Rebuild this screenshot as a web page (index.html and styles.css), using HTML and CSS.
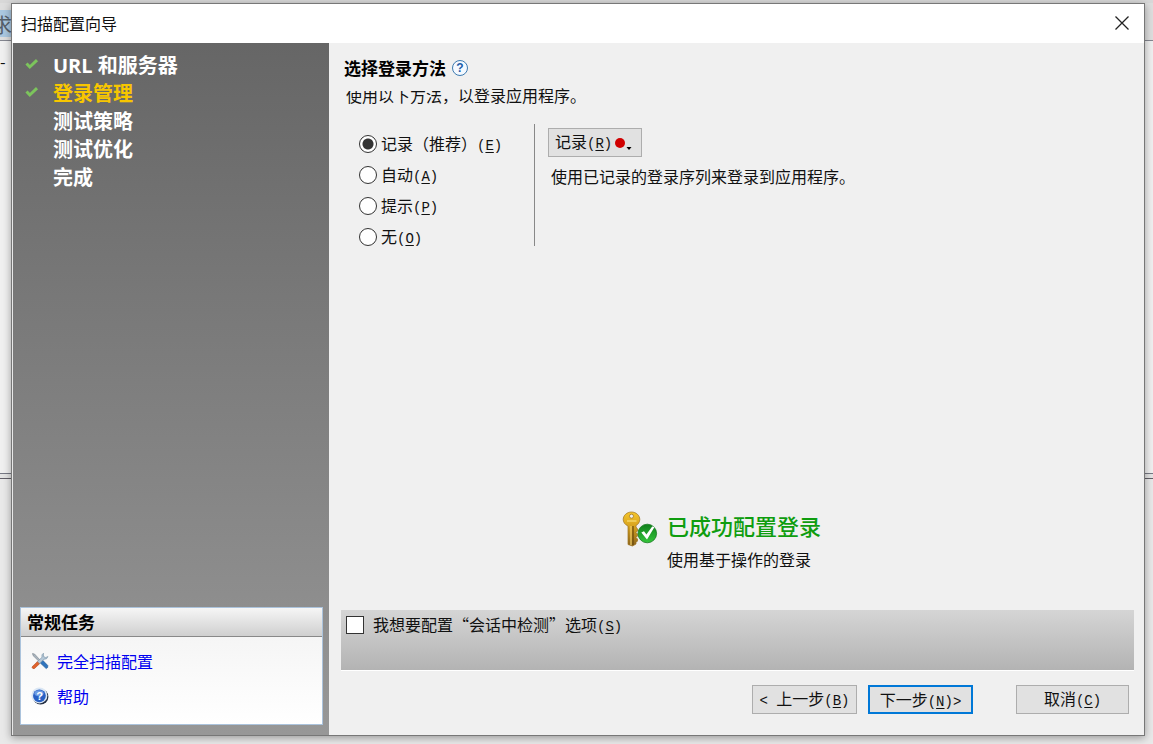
FILE: index.html
```html
<!DOCTYPE html>
<html lang="zh-CN">
<head>
	<meta charset="utf-8">
	<title>扫描配置向导</title>
	<link rel="stylesheet" href="styles.css">
</head>
<body>
	<div class="backdrop">
		<div class="backdrop-toolbar"><span>求</span></div>
		<div class="backdrop-pane">-</div>
		<div class="backdrop-splitter"></div>
		<div class="backdrop-pane lower"></div>
	</div>
	<div class="dialog">
		<header class="titlebar">
			<h1>扫描配置向导</h1>
			<button class="close" type="button" aria-label="关闭">
				<svg width="14" height="14" viewBox="0 0 14 14"><path d="M0.5 0.5L13.5 13.5M13.5 0.5L0.5 13.5" stroke="#222" stroke-width="1.3" fill="none"/></svg>
			</button>
		</header>
		<div class="body">
			<aside class="sidebar">
				<ol class="steps">
					<li><svg class="check" viewBox="0 0 14 12"><path d="M1.5 5.5L4.8 9L12 2.2" stroke="#7cc45c" stroke-width="3" fill="none"/></svg>URL 和服务器</li>
					<li class="current"><svg class="check" viewBox="0 0 14 12"><path d="M1.5 5.5L4.8 9L12 2.2" stroke="#7cc45c" stroke-width="3" fill="none"/></svg>登录管理</li>
					<li>测试策略</li>
					<li>测试优化</li>
					<li>完成</li>
				</ol>
				<section class="tasks">
					<h2>常规任务</h2>
					<ul>
						<li>
							<svg width="18" height="18" viewBox="0 0 18 18">
								<path d="M1.5 1.5L3.5 2L9.5 8.5L8.3 9.7L2 3.5Z" fill="#a9b4bd" stroke="#77828c" stroke-width="0.6"/>
								<path d="M9 9L11 7.6L16.8 13.5Q17.4 15.8 15.2 16.6L8.8 10.5Z" fill="#2f74bd" stroke="#1d5590" stroke-width="0.6"/>
								<path d="M12.5 1.2Q10.2 2.4 11 5.3L6.2 9.8L8.4 11.9L12.9 7.2Q16.2 7.6 17 4.5L14.7 5.5L12.6 4.6L12.4 3Z" fill="#b5c8d8" stroke="#7590a5" stroke-width="0.6"/>
								<path d="M6.3 9.7L8.4 11.9L3.5 16.5Q1.6 17.4 0.9 15Z" fill="#e0622c" stroke="#b34a1e" stroke-width="0.6"/>
							</svg>
							<a href="#">完全扫描配置</a>
						</li>
						<li>
							<svg width="18" height="18" viewBox="0 0 18 18">
								<circle cx="9.6" cy="9.8" r="7.8" fill="#222d42"/>
								<circle cx="8.4" cy="8.4" r="8" fill="#dbe7f4"/>
								<circle cx="8.4" cy="8.8" r="6.4" fill="#2860c4"/>
								<ellipse cx="8" cy="6.3" rx="4.6" ry="3" fill="#6b9ae4"/>
								<text class="help-mark" x="8.5" y="13" text-anchor="middle" fill="#fff">?</text>
							</svg>
							<a href="#">帮助</a>
						</li>
					</ul>
				</section>
			</aside>
			<main class="content">
				<div class="heading">
					<h2>选择登录方法</h2>
					<button class="help" type="button" aria-label="帮助">?</button>
				</div>
				<p class="intro"><span class="cut">使用以下方法</span>，以登录应用程序。</p>
				<div class="method">
					<div class="options">
						<label><input type="radio" name="method" checked><span>记录（推荐）<kbd>(<u>E</u>)</kbd></span></label>
						<label><input type="radio" name="method"><span>自动<kbd>(<u>A</u>)</kbd></span></label>
						<label><input type="radio" name="method"><span>提示<kbd>(<u>P</u>)</kbd></span></label>
						<label><input type="radio" name="method"><span>无<kbd>(<u>O</u>)</kbd></span></label>
					</div>
					<div class="detail">
						<button class="btn record" type="button">记录<kbd>(<u>R</u>)</kbd><svg width="20" height="16" viewBox="0 0 20 16"><circle cx="8" cy="8" r="5" fill="#d00000"/><path d="M14.5 12H19.5L17 15Z" fill="#000"/></svg></button>
						<p>使用已记录的登录序列来登录到应用程序。</p>
					</div>
				</div>
				<div class="success">
					<svg width="36" height="36" viewBox="0 0 36 36">
						<defs>
							<linearGradient id="gold" x1="0" y1="0" x2="0" y2="1">
								<stop offset="0" stop-color="#f5c62c"/>
								<stop offset="0.4" stop-color="#d9a520"/>
								<stop offset="1" stop-color="#8b641c"/>
							</linearGradient>
							<linearGradient id="green" x1="0" y1="0" x2="0" y2="1">
								<stop offset="0" stop-color="#0f7f1b"/>
								<stop offset="1" stop-color="#35c63c"/>
							</linearGradient>
						</defs>
						<path fill-rule="evenodd" d="M9.5 1C14 1 17.8 4.3 17.8 8.5C17.8 11.2 16 13.5 14 14.6V16L15.5 18V20L14 21.5L15.5 23V25L14 26.5L15.5 28V30L14 31.5V33L10.5 35L6 33.5V15C3 13.8 1.2 11.2 1.2 8.5C1.2 4.3 5 1 9.5 1ZM9.5 3.2A2 2 0 1 0 9.5 7.2A2 2 0 1 0 9.5 3.2Z" fill="url(#gold)" stroke="#9b701c" stroke-width="0.7"/>
						<path d="M5 10H14.5" stroke="#f9df7a" stroke-width="1.2"/>
						<path d="M9 15V34" stroke="#f0cf69" stroke-width="1.2"/>
						<path d="M11 15V34" stroke="#67480d" stroke-width="1.2"/>
						<circle cx="25.3" cy="22.5" r="9.3" fill="url(#green)" stroke="#13791c" stroke-width="0.8"/>
						<path d="M19.3 21.5L22 20.2L24.4 23.5L30.2 15.5L32.5 16L25 28.5Z" fill="#fff"/>
					</svg>
					<div>
						<h3>已成功配置登录</h3>
						<p>使用基于操作的登录</p>
					</div>
				</div>
				<div class="session">
					<label><input type="checkbox"><span>我想要配置“会话中检测”选项<kbd>(<u>S</u>)</kbd></span></label>
				</div>
				<footer class="actions">
					<button class="btn" type="button"><kbd>&lt; </kbd>上一步<kbd>(<u>B</u>)</kbd></button>
					<button class="btn primary" type="button">下一步<kbd>(<u>N</u>)&gt;</kbd></button>
					<button class="btn cancel" type="button">取消<kbd>(<u>C</u>)</kbd></button>
				</footer>
			</main>
		</div>
	</div>
</body>
</html>
```

FILE: styles.css
```css
* {
	box-sizing: border-box;
}
body {
	margin: 0;
	min-height: 100vh;
	display: flex;
	background: #e4e4e4;
	color: #111;
	font-family: "Noto Sans CJK SC", sans-serif;
	font-size: 16px;
	line-height: 24px;
}
h1, h2, h3, p, ol, ul {
	margin: 0;
	padding: 0;
}
ol, ul {
	list-style: none;
}
button, input {
	margin: 0;
	font: inherit;
	color: inherit;
}
kbd {
	font-family: "Liberation Mono", monospace;
	font-size: 14px;
	line-height: 16px;
	white-space: pre;
}
u {
	text-underline-offset: 2px;
}

/* main window behind the dialog */
.backdrop {
	position: absolute;
	inset: 0;
	overflow: hidden;
	display: flex;
	flex-direction: column;
}
.backdrop-toolbar {
	height: 41px;
	padding-top: 7px;
	border-top: 3px solid #d8d8d8;
	border-bottom: 1px solid #84868f;
	background: #dedede;
}
.backdrop-toolbar span {
	display: block;
	width: 12px;
	height: 27px;
	overflow: hidden;
	background: #abc8e0;
	color: #56606a;
	font-size: 20px;
	line-height: 30px;
	direction: rtl;
}
.backdrop-pane {
	height: 432px;
	padding-top: 8px;
	background: #f0f0f0;
}
.backdrop-splitter {
	height: 6px;
	border-top: 1px solid #777984;
	border-bottom: 1px solid #625f68;
}
.backdrop-pane.lower {
	flex: 1;
	background: #e9e9e9;
}

.dialog {
	position: relative;
	flex: 1;
	margin: 3px 8px 8px 11px;
	display: flex;
	flex-direction: column;
	border: 1px solid #777;
	background: #f0f0f0;
	box-shadow: 0 2px 8px rgba(0, 0, 0, 0.35);
}
.titlebar {
	display: flex;
	align-items: center;
	justify-content: space-between;
	height: 39px;
	padding: 0 15px 1px 9px;
	background: #fff;
}
.titlebar h1 {
	font-size: 16px;
	font-weight: normal;
}
.close {
	display: flex;
	padding: 0;
	border: 0;
	background: none;
}
.body {
	flex: 1;
	display: flex;
}

.sidebar {
	width: 317px;
	display: flex;
	flex-direction: column;
	justify-content: space-between;
	padding: 9px 6px 10px 7px;
	border-left: 1px solid #e8e8e8;
	background: linear-gradient(#666, #979797);
}
.steps li {
	position: relative;
	padding-left: 33px;
	color: #fff;
	font-family: "Open Sans", "Noto Sans CJK SC", sans-serif;
	font-size: 20px;
	font-weight: bold;
	line-height: 28px;
}
.steps li.current {
	color: #f7c600;
}
.check {
	position: absolute;
	left: 5px;
	top: 6px;
	width: 14px;
	height: 12px;
}
.tasks {
	border: 1px solid #abc3dc;
	background: linear-gradient(#f2f2f2, #fff);
}
.tasks h2 {
	padding: 2px 6px;
	border-bottom: 1px solid #888;
	background: linear-gradient(#f6f6f6, #cfcfcf);
	color: #000;
	font-size: 17px;
}
.tasks ul {
	display: flex;
	flex-direction: column;
	gap: 11px;
	padding: 12px 10px 16px;
}
.tasks li {
	display: flex;
	align-items: center;
	gap: 8px;
}
.tasks a {
	color: #0000f0;
	text-decoration: none;
}
.help-mark {
	font: bold 11px "Liberation Sans", sans-serif;
}

.content {
	flex: 1;
	display: flex;
	flex-direction: column;
	padding: 13px 10px 21px 12px;
}
.heading {
	display: flex;
	align-items: center;
	gap: 6px;
	padding-left: 3px;
}
.heading h2 {
	color: #000;
	font-size: 17px;
}
.help {
	width: 16px;
	height: 16px;
	padding: 0;
	border: 1px solid #3c7ab0;
	border-radius: 50%;
	background: #f4f9ff;
	color: #1d5ca8;
	font: bold 12px/14px "Liberation Sans", sans-serif;
}
.intro {
	margin-top: 3px;
	padding-left: 5px;
}
.cut {
	display: inline-block;
	vertical-align: top;
	clip-path: inset(8px 0 0 0);
}
.method {
	display: flex;
	margin-top: 17px;
}
.options {
	width: 194px;
	display: flex;
	flex-direction: column;
	gap: 13px;
	padding: 11px 0 0 18px;
	border-right: 1px solid #888;
}
.options label, .session label {
	display: flex;
	align-items: center;
	height: 18px;
}
.options label {
	gap: 4px;
}
.options span, .session span {
	padding-bottom: 3px;
}
.options input {
	appearance: none;
	width: 18px;
	height: 18px;
	border: 1px solid #333;
	border-radius: 50%;
	background: #fff;
}
.options input:checked {
	background: radial-gradient(circle, #333 5px, #fff 6px);
}
.detail {
	padding: 4px 0 0 13px;
}
.detail p {
	margin-top: 7px;
	padding-left: 3px;
}
.btn {
	width: 105px;
	height: 29px;
	padding: 0 0 5px;
	border: 1px solid #adadad;
	background: #e1e1e1;
	line-height: 24px;
	white-space: nowrap;
}
.btn.record {
	width: 94px;
	padding-left: 6px;
	text-align: left;
}
.btn.record svg {
	vertical-align: -3px;
}
.btn.primary {
	border: 2px solid #0078d7;
}
.btn.cancel {
	width: 113px;
	margin-left: 32px;
}
.success {
	display: flex;
	align-items: flex-start;
	justify-content: center;
	gap: 9px;
	margin-top: auto;
	padding-right: 32px;
}
.success h3 {
	color: #0f9d0f;
	font-size: 22px;
	font-weight: 500;
	line-height: 28px;
}
.success p {
	margin-top: 8px;
}
.session {
	height: 61px;
	margin-top: 39px;
	padding: 6px 5px;
	border-bottom: 1px solid #fff;
	background: linear-gradient(#d5d5d5, #b3b3b3);
}
.session label {
	gap: 9px;
}
.session input {
	appearance: none;
	width: 18px;
	height: 18px;
	border: 1px solid #333;
	background: #fff;
}
.actions {
	display: flex;
	justify-content: flex-end;
	gap: 11px;
	margin-top: 14px;
	padding-right: 5px;
}
```
